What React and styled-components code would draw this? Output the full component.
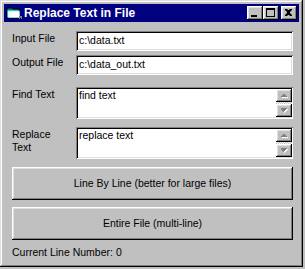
import React from "react";
import styled, { createGlobalStyle } from "styled-components";

const Global = createGlobalStyle`
  html, body { margin: 0; padding: 0; background: #c0c0c0; }
  body { font-family: "Liberation Sans", Arial, sans-serif; }
  * { box-sizing: border-box; }
`;

const raised = `
  box-shadow: inset -1px -1px #000, inset 1px 1px #fff, inset -2px -2px #808080, inset 2px 2px #dfdfdf;
`;
const sunken = `
  box-shadow: inset 1px 1px #808080, inset -1px -1px #fff, inset 2px 2px #000, inset -2px -2px #dfdfdf;
`;

const Window = styled.div`
  width: 303px;
  height: 267px;
  background: #c0c0c0;
  padding: 4px;
  display: flex;
  flex-direction: column;
  box-shadow: inset -1px -1px #000, inset 1px 1px #dfdfdf, inset -2px -2px #808080, inset 2px 2px #fff;
`;

const TitleBar = styled.div`
  height: 18px;
  background: #000080;
  display: flex;
  align-items: center;
  padding: 0 2px 0 2px;
`;

const TitleText = styled.div`
  flex: 1;
  margin-left: 2px;
  color: #fff;
  font-weight: bold;
  font-size: 12px;
  line-height: 18px;
  white-space: nowrap;
`;

const CapButton = styled.div`
  width: 16px;
  height: 14px;
  background: #c0c0c0;
  ${raised}
  display: flex;
  margin-left: ${(p) => (p.$gap ? "2px" : "0")};
  svg { display: block; }
`;

const Content = styled.div`
  flex: 1;
  display: flex;
  flex-direction: column;
  padding: 9px 6px 0 8px;
  font-size: 10.5px;
  color: #000;
`;

const FieldRow = styled.div`
  display: grid;
  grid-template-columns: 64px 1fr;
  height: ${(p) => p.$h}px;
  margin-bottom: ${(p) => p.$mb}px;
`;

const Label = styled.div`
  line-height: 13px;
  padding-top: 1px;
`;

const TextBox = styled.div`
  background: #fff;
  ${sunken}
  line-height: 13px;
  padding: ${(p) => (p.$multi ? "2px 2px 2px 3px" : "3px 3px 0 3px")};
  display: flex;
  white-space: nowrap;
  overflow: hidden;
`;

const BoxText = styled.div`
  flex: 1;
`;

const ScrollBar = styled.div`
  width: 16px;
  display: flex;
  flex-direction: column;
  margin-right: -1px;
`;

const ScrollBtn = styled.div`
  height: 13px;
  background: #c0c0c0;
  ${raised}
  display: flex;
  align-items: center;
  justify-content: center;
`;

const Track = styled.div`
  flex: 1;
  background: repeating-conic-gradient(#c0c0c0 0 25%, #fff 0 50%) 0 0 / 2px 2px;
`;

const BigButton = styled.div`
  height: 33px;
  background: #c0c0c0;
  ${raised}
  display: flex;
  align-items: center;
  justify-content: center;
  margin-bottom: ${(p) => p.$mb || 0}px;
  line-height: 13px;
`;

const Status = styled.div`
  margin-top: 6px;
  line-height: 13px;
`;

const AppIcon = () => (
  <svg width="16" height="16" viewBox="0 0 16 16">
    <path d="M1 3h5l1 1h6v9H1z" fill="#008080" stroke="#000" strokeWidth="1" />
    <path d="M1.5 5.5h12v7h-12z" fill="#80ffff" />
    <path d="M2.5 6.5h11v6h-11z" fill="#fff" />
    <rect x="13" y="11" width="3" height="3" fill="#808080" />
    <rect x="14" y="13" width="1" height="1" fill="#000" />
  </svg>
);

const MinGlyph = () => (
  <svg width="16" height="14">
    <rect x="4" y="9" width="6" height="2" fill="#000" />
  </svg>
);
const MaxGlyph = () => (
  <svg width="16" height="14">
    <rect x="3.5" y="2.5" width="8" height="8" fill="none" stroke="#000" />
    <rect x="3" y="3" width="9" height="1" fill="#000" />
  </svg>
);
const CloseGlyph = () => (
  <svg width="16" height="14">
    <path d="M4 3h2l1 1h1l1-1h2v1l-2 2v1l2 2v1H9l-1-1H7l-1 1H4V9l2-2V6L4 4z" fill="#000" />
  </svg>
);

const Arrow = ({ dir }) => (
  <svg width="9" height="6" viewBox="0 0 9 6">
    {dir === "up" ? (
      <>
        <path d="M5 2h1v1h1v1h1v1H2V4h1V3h1V2z" fill="#fff" />
        <path d="M4 1h1v1h1v1h1v1H1V3h1V2h1V1z" fill="#808080" />
      </>
    ) : (
      <>
        <path d="M2 2h6v1H7v1H6v1H5v1H4V5H3V4H2z" fill="#fff" transform="translate(0,-1)" />
        <path d="M1 1h6v1H6v1H5v1H4v1H3V4H2V3H1z" fill="#808080" transform="translate(0,-1)" />
      </>
    )}
  </svg>
);

const MultiBox = ({ text }) => (
  <TextBox $multi>
    <BoxText>{text}</BoxText>
    <ScrollBar>
      <ScrollBtn><Arrow dir="up" /></ScrollBtn>
      <Track />
      <ScrollBtn><Arrow dir="down" /></ScrollBtn>
    </ScrollBar>
  </TextBox>
);

export default function App() {
  return (
    <>
      <Global />
      <Window>
        <TitleBar>
          <AppIcon />
          <TitleText>Replace Text in File</TitleText>
          <CapButton><MinGlyph /></CapButton>
          <CapButton><MaxGlyph /></CapButton>
          <CapButton $gap><CloseGlyph /></CapButton>
        </TitleBar>
        <Content>
          <FieldRow $h={20} $mb={4}>
            <Label>Input File</Label>
            <TextBox>c:\data.txt</TextBox>
          </FieldRow>
          <FieldRow $h={20} $mb={12}>
            <Label>Output File</Label>
            <TextBox>c:\data_out.txt</TextBox>
          </FieldRow>
          <FieldRow $h={32} $mb={8}>
            <Label>Find Text</Label>
            <MultiBox text="find text" />
          </FieldRow>
          <FieldRow $h={32} $mb={8}>
            <Label>Replace<br />Text</Label>
            <MultiBox text="replace text" />
          </FieldRow>
          <BigButton $mb={7}>Line By Line (better for large files)</BigButton>
          <BigButton>Entire File (multi-line)</BigButton>
          <Status>Current Line Number: 0</Status>
        </Content>
      </Window>
    </>
  );
}
